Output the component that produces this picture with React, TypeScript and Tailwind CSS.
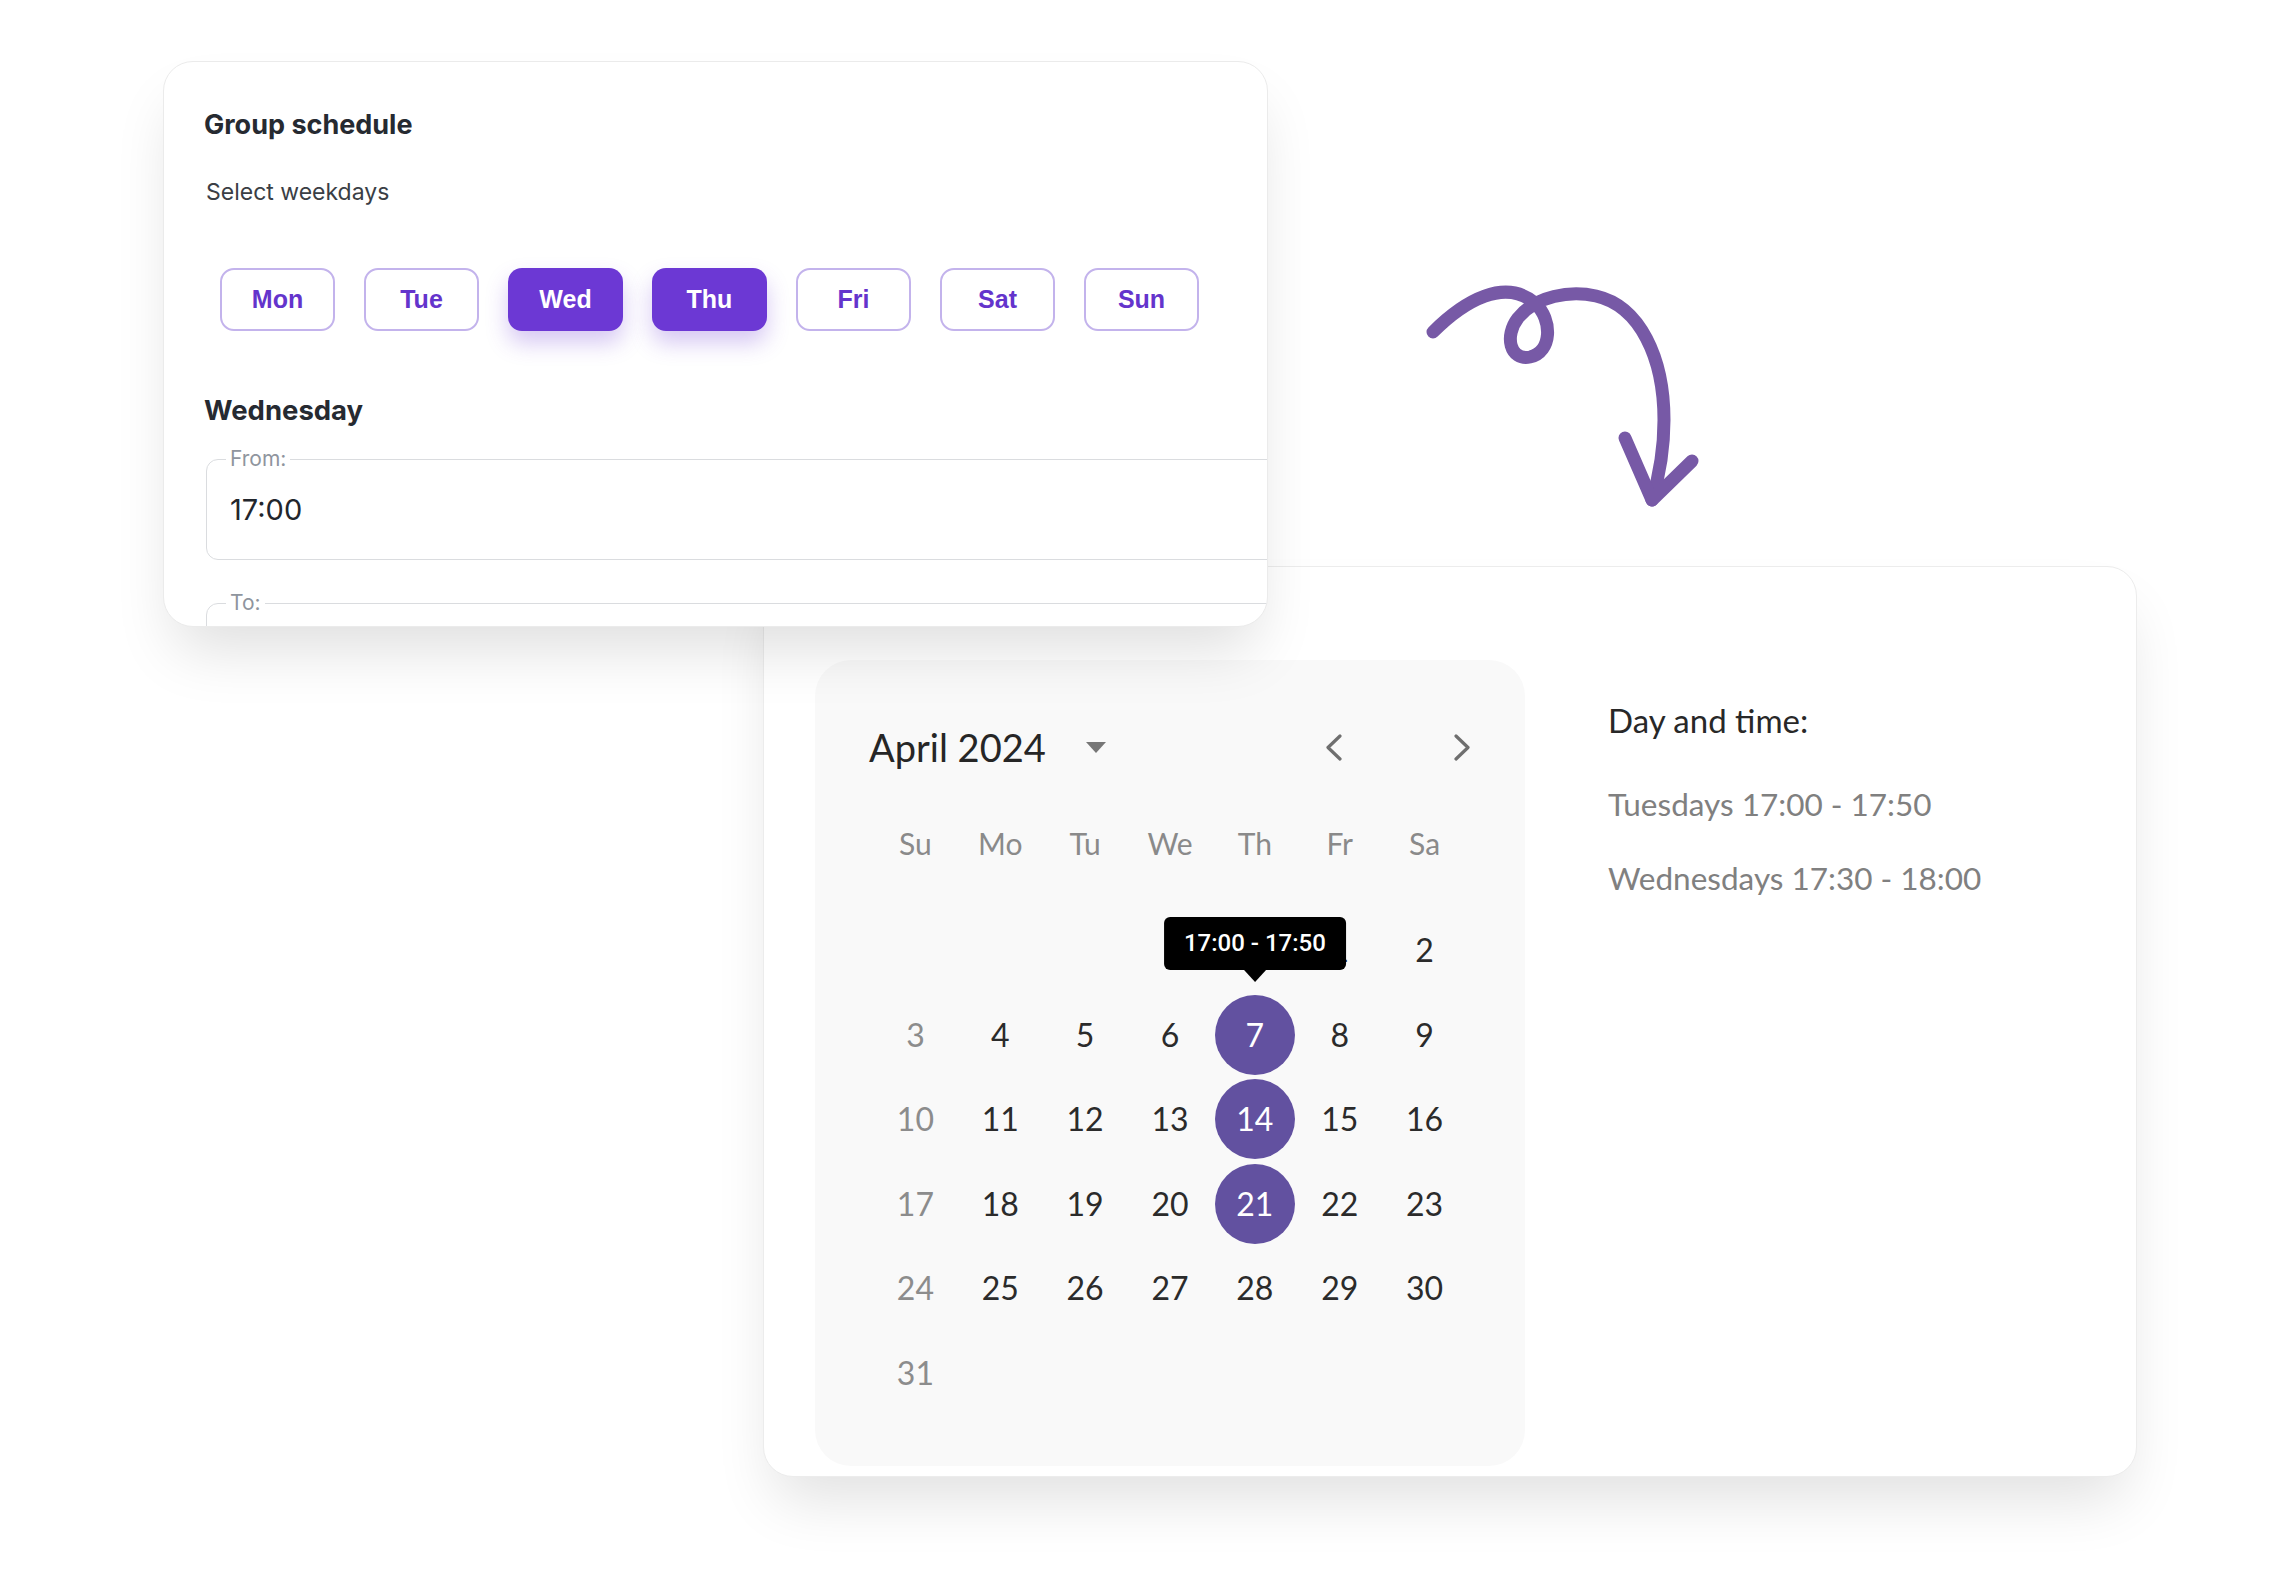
import React from 'react';

const weekdays = ['Mon', 'Tue', 'Wed', 'Thu', 'Fri', 'Sat', 'Sun'];
const picked = ['Wed', 'Thu'];

const dayHeads = ['Su', 'Mo', 'Tu', 'We', 'Th', 'Fr', 'Sa'];
const weeks: (number | null)[][] = [
  [null, null, null, null, null, 1, 2],
  [3, 4, 5, 6, 7, 8, 9],
  [10, 11, 12, 13, 14, 15, 16],
  [17, 18, 19, 20, 21, 22, 23],
  [24, 25, 26, 27, 28, 29, 30],
  [31, null, null, null, null, null, null],
];
const lessons = [7, 14, 21];

function CurlyArrow() {
  return (
    <svg
      className="absolute left-[1400px] top-[260px]"
      width="320"
      height="280"
      viewBox="1400 260 320 280"
      fill="none"
    >
      <path
        d="M1433 332 C1465 300 1505 278 1535 303 C1553 320 1552 352 1530 357 C1510 361 1504 336 1518 318 C1536 296 1570 290 1596 296 C1640 306 1664 358 1664 420 C1664 455 1658 480 1652 500"
        stroke="#7759a6"
        strokeWidth="13"
        strokeLinecap="round"
        strokeLinejoin="round"
      />
      <path
        d="M1625 438 L1652 500 L1692 461"
        stroke="#7759a6"
        strokeWidth="13"
        strokeLinecap="round"
        strokeLinejoin="round"
      />
    </svg>
  );
}

function TimeField({ label, value }: { label: string; value?: string }) {
  return (
    <fieldset className="w-[1200px] h-[111px] rounded-[12px] border border-[#dadcdf] px-[23px]">
      <legend className="-ml-[4px] px-[4px] text-[21px] leading-[20px] text-[#8f959e]">{label}</legend>
      {value && (
        <div className="mt-[24px] text-[29px] leading-[33px] text-[#22262c]">{value}</div>
      )}
    </fieldset>
  );
}

function GroupSchedule() {
  return (
    <div className="relative z-10 w-[1105px] h-[566px] overflow-hidden rounded-[30px] border border-[#ebebeb] bg-white pl-[42px] pt-[47px] font-['Inter',sans-serif] shadow-[0_34px_60px_-12px_rgba(0,0,0,0.13)]">
      <h2 className="-ml-[2px] text-[27px] leading-[32px] font-bold text-[#262a31]">Group schedule</h2>
      <p className="mt-[37px] text-[23px] leading-[28px] text-[#3a3e45]">Select weekdays</p>

      <div className="mt-[62px] ml-[14px] flex gap-[29px]">
        {weekdays.map((d) => {
          const on = picked.includes(d);
          return (
            <button
              key={d}
              className={
                on
                  ? "w-[115px] h-[63px] rounded-[14px] bg-[#6c38d4] font-['Liberation_Sans',Arial,sans-serif] text-[25px] font-bold text-white shadow-[0_12px_22px_rgba(108,56,212,0.28)]"
                  : "w-[115px] h-[63px] rounded-[14px] border-2 border-[#c3b3ec] bg-white font-['Liberation_Sans',Arial,sans-serif] text-[25px] font-bold text-[#6434cc]"
              }
            >
              {d}
            </button>
          );
        })}
      </div>

      <h3 className="-ml-[2px] mt-[63px] text-[27.5px] leading-[32px] font-bold text-[#262a31]">Wednesday</h3>
      <div className="mt-[23px] flex flex-col gap-[33px]">
        <TimeField label="From:" value="17:00" />
        <TimeField label="To:" />
      </div>
    </div>
  );
}

function Chevron({ dir }: { dir: 'left' | 'right' }) {
  return (
    <button className="w-[40px] h-[40px] flex items-center justify-center">
      <svg width="18" height="27" viewBox="0 0 18 27" fill="none">
        <path
          d={dir === 'left' ? 'M15 2 L3 13.5 L15 25' : 'M3 2 L15 13.5 L3 25'}
          stroke="#6f6f6f"
          strokeWidth="3.2"
          strokeLinecap="round"
          strokeLinejoin="round"
        />
      </svg>
    </button>
  );
}

function Calendar() {
  return (
    <div className="w-[710px] h-[806px] rounded-[36px] bg-[#f9f9f9] px-[58px] pt-[67px]">
      <div className="flex h-[40px] items-center">
        <span className="-ml-[4px] text-[38px] leading-[46px] text-[#262626]">April 2024</span>
        <svg className="ml-[40px]" width="20" height="11" viewBox="0 0 20 11">
          <path d="M0 0 H20 L10 11 Z" fill="#777777" />
        </svg>
        <div className="ml-auto -mr-[15px] flex gap-[88px]">
          <Chevron dir="left" />
          <Chevron dir="right" />
        </div>
      </div>

      <div className="mt-[52px] grid h-[48px] grid-cols-7 items-center">
        {dayHeads.map((h) => (
          <span key={h} className="text-center text-[30px] leading-[36px] text-[#8a8a8a]">
            {h}
          </span>
        ))}
      </div>

      <div className="mt-[40.7px] grid grid-cols-7">
        {weeks.flat().map((n, i) => {
          const on = n !== null && lessons.includes(n);
          const sunday = i % 7 === 0;
          return (
            <div key={i} className="relative flex h-[84.6px] items-center justify-center">
              {n !== null && (
                <span
                  className={
                    on
                      ? 'flex h-[80px] w-[80px] items-center justify-center rounded-full bg-[#6251a0] text-[32px] text-white'
                      : sunday
                        ? 'text-[32px] text-[#8c8c8c]'
                        : 'text-[32px] text-[#2b2b2b]'
                  }
                >
                  {n}
                </span>
              )}
              {n === 7 && (
                <div className="absolute left-1/2 top-[-75px] z-10 -translate-x-1/2">
                  <div className="whitespace-nowrap rounded-[6px] bg-black px-[20px] py-[12px] font-['Roboto',sans-serif] text-[24px] leading-[29px] font-medium text-white">
                    17:00 - 17:50
                  </div>
                  <div className="mx-auto h-0 w-0 border-x-[11px] border-t-[12px] border-x-transparent border-t-black" />
                </div>
              )}
            </div>
          );
        })}
      </div>
    </div>
  );
}

function LessonCalendar() {
  return (
    <div className="-mt-[61px] ml-[600px] flex h-[911px] w-[1374px] rounded-[30px] border border-[#ececec] bg-white pl-[51px] pt-[93px] font-['Lato',sans-serif] shadow-[0_34px_60px_-12px_rgba(0,0,0,0.12)]">
      <Calendar />
      <div className="ml-[83px] mt-[43px]">
        <h4 className="text-[33px] leading-[34px] text-[#282828]">Day and time:</h4>
        <p className="mt-[49px] text-[31.5px] leading-[36px] text-[#808080]">Tuesdays 17:00 - 17:50</p>
        <p className="mt-[38px] text-[31.5px] leading-[36px] text-[#808080]">Wednesdays 17:30 - 18:00</p>
      </div>
    </div>
  );
}

export default function App() {
  return (
    <div className="relative h-[1570px] w-[2270px] overflow-hidden bg-white pl-[163px] pt-[61px]">
      <GroupSchedule />
      <LessonCalendar />
      <CurlyArrow />
    </div>
  );
}
